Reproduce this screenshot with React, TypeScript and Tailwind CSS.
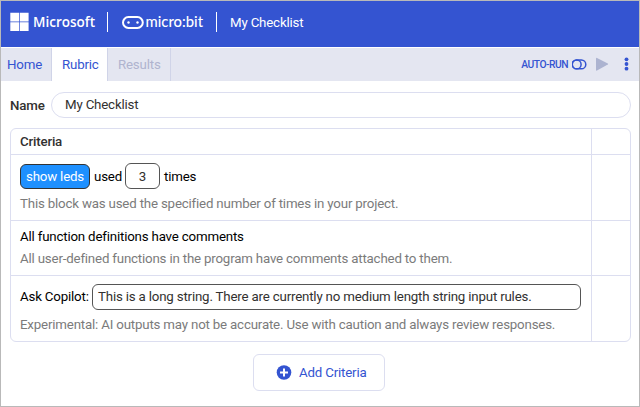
import type { ReactNode } from "react";

function MicrosoftLogo() {
  return (
    <svg width="86" height="24" viewBox="0 -2 86 24" fill="#fff" className="block overflow-visible">
      <path d="M.3 .8h8.800v8.700H.3zM9.800 .8h8.800v8.700h-8.800zM.3 10.200h8.800v8.700H.3zM9.800 10.200h8.800v8.700h-8.800z" />
      <text x="23" y="15.200" fontFamily="Open Sans, sans-serif" fontWeight="600" fontSize="15" textLength="62" lengthAdjust="spacingAndGlyphs">Microsoft</text>
    </svg>
  );
}

function MicrobitLogo() {
  return (
    <svg width="82" height="24" viewBox="0 -2 82 24" fill="#fff" className="block overflow-visible">
      <rect x="1" y="5.100" width="19.800" height="10.800" rx="5.400" fill="none" stroke="#fff" strokeWidth="2" />
      <circle cx="6.500" cy="10.500" r="1.200" />
      <circle cx="15.500" cy="10.500" r="1.200" />
      <text x="23.500" y="14.600" fontFamily="Lato, sans-serif" fontWeight="500" fontSize="15.500" textLength="57.500" lengthAdjust="spacingAndGlyphs">micro:bit</text>
    </svg>
  );
}

function Row({ height, children }: { height: string; children: ReactNode }) {
  return (
    <div className={`flex border-t border-[#dcdef0] ${height}`}>
      <div className="flex-1 pl-[9px]">{children}</div>
      <div className="w-[39px] border-l border-[#dcdef0]" />
    </div>
  );
}

export default function App() {
  return (
    <div className="h-[407px] w-[640px] overflow-hidden border border-[#b9b9b9] bg-white font-['Roboto',sans-serif] text-[13.3px] leading-4 tracking-[-0.185px] whitespace-nowrap text-[#323130]">
      <header className="flex h-[46px] items-start bg-[#3454d1] text-white">
        <div className="mt-[9px] ml-[9px] tracking-normal"><MicrosoftLogo /></div>
        <div className="mt-[11px] ml-[11px] h-[20px] w-px bg-white" />
        <div className="mt-[9px] ml-[14px] tracking-normal"><MicrobitLogo /></div>
        <div className="mt-[11px] ml-[12px] h-[20px] w-px bg-white" />
        <div className="mt-[14px] ml-[13px]">My Checklist</div>
      </header>
      <nav className="flex h-[34px] border-t border-white bg-[#e4e6f1] text-[#3454d1]">
        <div className="w-[51px] border-r border-[#d0d4e8] pt-[9px] pl-[6px]">Home</div>
        <div className="w-[56px] border-r border-[#d0d4e8] bg-white pt-[9px] pl-[10px]">Rubric</div>
        <div className="w-[63px] border-r border-[#d0d4e8] pt-[9px] pl-[10px] text-[#b0b4cf]">Results</div>
        <div className="ml-auto flex items-start pt-[8px]">
          <span className="mt-px text-[10.300px] font-medium tracking-[-0.500px]">AUTO-RUN</span>
          <svg width="15" height="16" viewBox="0 0 15 16" fill="none" stroke="#3454d1" strokeWidth="1.500" className="ml-[4px]">
            <rect x=".2" y="4" width="13.600" height="8.800" rx="4.400" />
            <circle cx="4.700" cy="8.400" r="4.400" />
          </svg>
          <svg width="13" height="16" viewBox="0 0 13 16" fill="#acb3d0" className="ml-[9px]">
            <path d="M0 2.200Q0 1.400 1 1.900L11.800 7.400Q12.600 8 11.800 8.600L1 14.500Q0 15 0 14Z" />
          </svg>
          <svg width="5" height="16" viewBox="0 0 5 16" fill="#3454d1" className="mr-[10px] ml-[15px]">
            <circle cx="2.500" cy="3.300" r="1.900" />
            <circle cx="2.500" cy="8" r="1.900" />
            <circle cx="2.500" cy="12.700" r="1.900" />
          </svg>
        </div>
      </nav>
      <main className="px-[9px] pt-[11px]">
        <div className="flex h-[26px] items-center">
          <span className="mt-[2px] w-[41px] shrink-0 font-medium">Name</span>
          <div className="flex h-[26px] w-[580px] shrink-0 items-center rounded-full border border-[#dcdef0] pl-[13px]">My Checklist</div>
        </div>
        <section className="mt-[10px] h-[214px] w-[621px] overflow-hidden rounded-[6px] border border-[#dcdef0]">
          <div className="flex h-[25px]">
            <div className="flex-1 pt-[5px] pl-[9px] font-medium">Criteria</div>
            <div className="w-[39px] border-l border-[#dcdef0]" />
          </div>
          <Row height="h-[66px]">
            <div className="mt-[8px] flex h-[26px] items-center text-black">
              <div className="flex h-[25px] w-[70px] items-center justify-center rounded-[6px] border border-[#333] bg-[#1e90ff] pt-px text-white">show leds</div>
              <span className="mt-px ml-[4px] w-[31px]">used</span>
              <div className="flex h-[26px] w-[35px] items-center justify-center rounded-[6px] border border-[#555] pt-px text-[#323130]">3</div>
              <span className="mt-px ml-[4px]">times</span>
            </div>
            <p className="mt-[7px] text-[#7b7b7b]">This block was used the specified number of times in your project.</p>
          </Row>
          <Row height="h-[55px]">
            <p className="mt-[8px] text-black">All function definitions have comments</p>
            <p className="mt-[6px] text-[#7b7b7b]">All user-defined functions in the program have comments attached to them.</p>
          </Row>
          <Row height="h-[66px]">
            <div className="mt-[8px] flex h-[26px] items-center text-black">
              <span className="w-[72px]">Ask Copilot:</span>
              <div className="flex h-[26px] w-[489px] items-center rounded-[6px] border border-[#555] pl-[5px] text-[#323130]">This is a long string. There are currently no medium length string input rules.</div>
            </div>
            <p className="mt-[7px] text-[#7b7b7b]">Experimental: AI outputs may not be accurate. Use with caution and always review responses.</p>
          </Row>
        </section>
        <div className="mt-[12px] flex justify-center">
          <button className="mr-[2px] flex h-[37px] w-[132px] items-center rounded-[6px] border border-[#dcdef0] pl-[22px] text-[#3454d1]">
            <svg width="16" height="16" viewBox="0 0 16 16">
              <circle cx="8" cy="7.500" r="7.300" fill="#3454d1" />
              <path d="M8 3.500v8M4 7.500h8" stroke="#fff" strokeWidth="2" />
            </svg>
            <span className="mt-px ml-[7px]">Add Criteria</span>
          </button>
        </div>
      </main>
    </div>
  );
}
